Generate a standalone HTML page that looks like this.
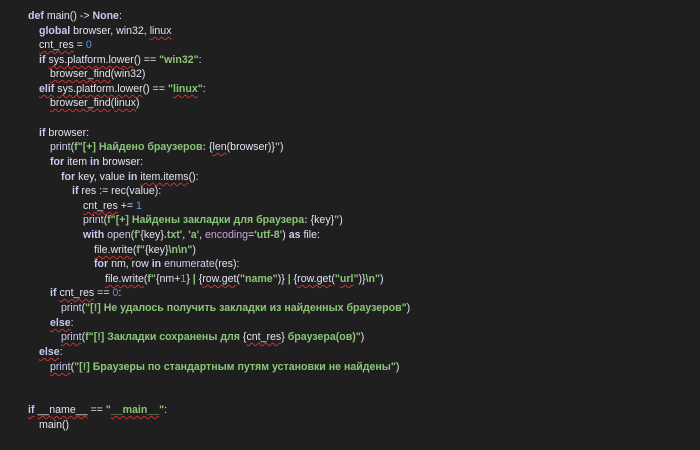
<!DOCTYPE html>
<html><head><meta charset="utf-8"><style>
html,body{margin:0;padding:0;background:#1f1f1f;width:700px;height:450px;overflow:hidden}
.c{position:absolute;left:0;top:0;font-family:"Liberation Sans","DejaVu Sans",sans-serif;font-size:10.6px;color:#e4e4f2;white-space:pre}
.l{position:absolute;height:14px;line-height:14px}
.k{color:#c9c9f2;font-weight:bold}
.f{color:#d0d0f4}
.s{color:#8cc47a;font-weight:bold}
.n{color:#4a9fe8}
.p{color:#c8a0e0}
.u{text-decoration:underline wavy #d03030;text-decoration-thickness:1px;text-underline-offset:2px}
</style></head><body><div class="c">
<div class="l" style="top:9px;left:28px"><span class="k">def</span> main() -&gt; <span class="k">None</span>:</div>
<div class="l" style="top:24px;left:39px"><span class="k">global</span> browser, win32, <span class="u">linux</span></div>
<div class="l" style="top:38px;left:39px"><span class="u">cnt_res</span> = <span class="n">0</span></div>
<div class="l" style="top:53px;left:39px"><span class="k">if</span> <span class="u">sys.platform.lower</span>() == <span class="s">"win32"</span>:</div>
<div class="l" style="top:67px;left:50px"><span class="u">browser_find</span>(win32)</div>
<div class="l" style="top:82px;left:39px"><span class="k u">elif</span> <span class="u">sys.platform.lower</span>() == <span class="s">"<span class="u">linux</span>"</span>:</div>
<div class="l" style="top:96px;left:50px"><span class="u">browser_find</span>(<span class="u">linux</span>)</div>
<div class="l" style="top:126px;left:39px"><span class="k">if</span> browser:</div>
<div class="l" style="top:140px;left:50px"><span class="f">print</span>(<span class="s">f"[+] Найдено браузеров: </span>{<span class="u">len</span>(browser)}<span class="s">"</span>)</div>
<div class="l" style="top:155px;left:50px"><span class="k">for</span> item <span class="k">in</span> browser:</div>
<div class="l" style="top:170px;left:61px"><span class="k">for</span> key, value <span class="k">in</span> <span class="u">item.items</span>():</div>
<div class="l" style="top:184px;left:72px"><span class="k">if</span> res := rec(value):</div>
<div class="l" style="top:199px;left:83px"><span class="u">cnt_res</span> += <span class="n">1</span></div>
<div class="l" style="top:213px;left:83px"><span class="f">print</span>(<span class="s">f"[+] Найдены закладки для браузера: </span>{key}<span class="s">"</span>)</div>
<div class="l" style="top:228px;left:83px"><span class="k">with</span> <span class="f">open</span>(<span class="s">f'</span>{key}<span class="s">.txt'</span>, <span class="s">'a'</span>, <span class="p">encoding</span>=<span class="s">'utf-8'</span>) <span class="k">as</span> file:</div>
<div class="l" style="top:243px;left:94px"><span class="u">file.write</span>(<span class="s">f"</span>{key}<span class="s">\n\n"</span>)</div>
<div class="l" style="top:257px;left:94px"><span class="k">for</span> nm, row <span class="k">in</span> <span class="f">enumerate</span>(res):</div>
<div class="l" style="top:272px;left:105px"><span class="u">file.write</span>(<span class="s">f"</span>{nm+<span class="n">1</span>}<span class="s"> | </span>{<span class="u">row.get</span>(<span class="s">"name"</span>)}<span class="s"> | </span>{<span class="u">row.get</span>(<span class="s">"<span class="u">url</span>"</span>)}<span class="s">\n"</span>)</div>
<div class="l" style="top:286px;left:50px"><span class="k">if</span> <span class="u">cnt_res</span> == <span class="n">0</span>:</div>
<div class="l" style="top:301px;left:61px"><span class="f">print</span>(<span class="s">"[!] Не удалось получить закладки из найденных браузеров"</span>)</div>
<div class="l" style="top:316px;left:50px"><span class="k u">else</span>:</div>
<div class="l" style="top:330px;left:61px"><span class="f u">print</span>(<span class="s">f"[!] Закладки сохранены для </span>{<span class="u">cnt_res</span>}<span class="s"> браузера(ов)"</span>)</div>
<div class="l" style="top:345px;left:39px"><span class="k u">else</span>:</div>
<div class="l" style="top:360px;left:50px"><span class="f u">print</span>(<span class="s">"[!] Браузеры по стандартным путям установки не найдены"</span>)</div>
<div class="l" style="top:403px;left:28px"><span class="k u">if</span> <span class="u">__name__</span> == <span class="s">"<span class="u">__main__</span>"</span>:</div>
<div class="l" style="top:418px;left:39px">main()</div>
</div></body></html>
